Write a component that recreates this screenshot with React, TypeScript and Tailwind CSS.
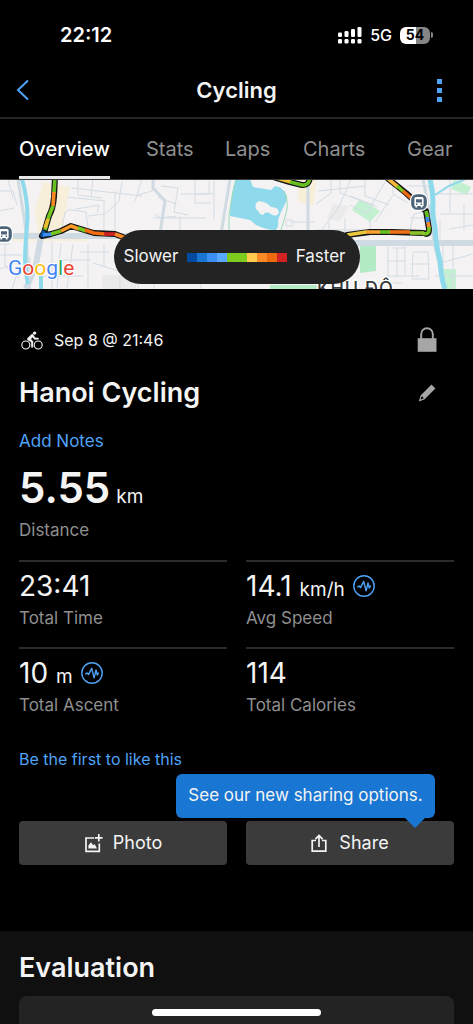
import clsx from 'clsx';

const TABS = ['Overview', 'Stats', 'Laps', 'Charts', 'Gear'];

const SPEED_COLORS = [
  'bg-[#004a9f]',
  'bg-[#1976d2]',
  'bg-[#3b8ff3]',
  'bg-[#58a8ff]',
  'bg-[#7ecb20]',
  'bg-[#7ecb20]',
  'bg-[#ffcb4f]',
  'bg-[#fb8a26]',
  'bg-[#ed6a10]',
  'bg-[#d32222]',
];

interface Metric {
  label: string;
  value: string;
  unit?: string;
  corrected?: boolean;
}

const METRICS: Metric[] = [
  { label: 'Total Time', value: '23:41' },
  { label: 'Avg Speed', value: '14.1', unit: 'km/h', corrected: true },
  { label: 'Total Ascent', value: '10', unit: 'm', corrected: true },
  { label: 'Total Calories', value: '114' },
];

function SignalIcon() {
  return (
    <svg width="25" height="18" viewBox="0 0 25 18" fill="#fff">
      <rect x="1" y="6.5" width="4" height="4.5" rx="1.2" />
      <rect x="7.5" y="5" width="4" height="6" rx="1.2" />
      <rect x="14" y="3" width="4" height="8" rx="1.2" />
      <rect x="20.5" y="1" width="4" height="10" rx="1.2" />
      <rect x="1" y="13" width="4" height="4.5" rx="1.2" />
      <rect x="7.5" y="13" width="4" height="4.5" rx="1.2" />
      <rect x="14" y="13" width="4" height="4.5" rx="1.2" />
      <rect x="20.5" y="13" width="4" height="4.5" rx="1.2" />
    </svg>
  );
}

function BikeIcon() {
  return (
    <svg width="22" height="19" viewBox="0 0 22 19" fill="none" stroke="#f4f4f4">
      <circle cx="4.8" cy="14" r="4" strokeWidth="1.1" />
      <circle cx="17.2" cy="14" r="4" strokeWidth="1.1" />
      <circle cx="13.6" cy="2.1" r="1.7" fill="#f4f4f4" stroke="none" />
      <path d="M10.8 3.2 6.6 7.2q-.8.9.2 1.7l3.5 2.2.1 5.2h1.5v-6L9.6 8l2.2-2 1.5 2.3h4.1V7h-3.2l-2.1-3.4q-.6-.9-1.3-.4z" fill="#f4f4f4" strokeWidth=".5" />
    </svg>
  );
}

function LockIcon() {
  return (
    <svg width="20" height="26" viewBox="0 0 20 26" fill="none">
      <path d="M4.2 12V7a5.8 5.8 0 0 1 11.6 0v5" stroke="#a6a6a6" strokeWidth="1.9" />
      <path d="M.7 11.2h18.8v13.6H.7z" fill="#a6a6a6" />
    </svg>
  );
}

function PencilIcon() {
  return (
    <svg width="18" height="18" viewBox="0 0 18 18" fill="#a6a6a6">
      <path fillRule="evenodd" d="M13.5.6 17.4 4.5 6.4 15.4.7 17.4 2.6 11.5zM3.6 12.6 2.5 15.6 5.4 14.5 5.2 13z" />
    </svg>
  );
}

function CorrectedIcon() {
  return (
    <svg width="22" height="22" viewBox="0 0 22 22" fill="none" stroke="#4fa3f7">
      <circle cx="11" cy="11" r="10.2" strokeWidth="1.4" />
      <path d="M4.3 12.2 6.2 11l1.3 1.6L10.7 6.4l2.4 9.4L15 8l1.3 5 1.4-2.3" strokeWidth="1.4" strokeLinejoin="round" />
    </svg>
  );
}

function PhotoIcon() {
  return (
    <svg width="19" height="19" viewBox="0 0 19 19" fill="none" stroke="#f4f4f4">
      <path d="M10.3 4H2v13.3h13.3V9.5" strokeWidth="1.7" />
      <path d="M14.8 0v7.6M11 3.8h7.6" strokeWidth="1.7" />
      <path d="M4.4 14.6v-3l2.6-3.4 2.2 3 1.4-1.2 2.4 4.6z" fill="#f4f4f4" stroke="none" />
    </svg>
  );
}

function ShareIcon() {
  return (
    <svg width="16" height="19" viewBox="0 0 16 19" fill="none" stroke="#f4f4f4" strokeWidth="1.7">
      <path d="M5 6.5H1.2v10.7h13.6V6.5H11M8 13V1.5M4.4 5.2 8 1.5l3.6 3.7" />
    </svg>
  );
}

function BusStop({ x, y }: { x: number; y: number }) {
  return (
    <g transform={`translate(${x} ${y})`}>
      <rect x="-8.5" y="-8.5" width="17" height="17" rx="6.5" fill="#4d6478" stroke="#fff" strokeWidth="1.3" />
      <path fillRule="evenodd" fill="#fff" d="M-3-5h6q1.6 0 1.6 1.6V4h-1v1.5H1.8V4h-3.6v1.5h-1.8V4h-1v-7.4Q-4.6-5-3-5zM-3-2.8V.4h6v-3.2zM-3 1.6V3h1.4V1.6zM1.6 1.6V3H3V1.6z" />
    </g>
  );
}

function RouteMap() {
  return (
    <svg className="block h-[109px] w-full" viewBox="0 1 473 109" preserveAspectRatio="xMidYMid slice" role="img" aria-label="Activity route map">
      <rect width="473" height="110" fill="#f4f2f3" />

      {/* blocks and parks */}
      <path d="M43 3 70 8 62 54 90 56 88 62H8l-2-7 32-2-3-22zM298 0h18l-2 27-16-4z" fill="#f8efdb" />
      <path d="m360 20 20 12-10 11-18-12z" fill="#c4f0d2" />
      <path d="M360 61h16v31l-16 2zM270 106h50v4h-50z" fill="#b4ebc7" />
      <path d="m333 25 16 2-9 15-13-2zM102 96h34v14H102z" fill="#eaeaea" />
      <path d="m454 0 17 8-4 8-16-6zM442 90h14v20h-14z" fill="#c4f0d2" />

      {/* side streets */}
      <g fill="none" stroke="#d3dce4" strokeWidth="1">
        <path d="M0 12h13l4 14M0 32l14-3M8 0l5 20M0 76h22M5 60v27l14 12M0 90l13-5M12 110l6-18M30 78v32M0 65h10" />
        <path d="M78 0v16l24 3M93 0l-2 18M67 18l38 4M72 9l70 8M76 30l23-4-2 8M104 22v34M122 2l-3 20-16 15M142 0l-7 22M62 48l3-14q2-4 7-3l14 2 2 16M88 37l16-2" />
        <path d="M115 12v45M154 0l-2 12-14 4M161 7l17 2-4 24 14 3M158 18l18 7M155 35l6 4 16-2M153 39h53M180 37v17M181 15h28v-13M195 0v24h16M214 2v38M195 15h19" />
        <path d="M52 62v48M61 64l-4 45M73 65l-6 44M88 65v45M104 65v23M58 81h33M43 97h40M80 73h29M120 110V98M138 110v-8M154 110v-6M201 110v-6M93 84l29 9" />
        <path d="M290 43h25M286 41h7v6h-7zM318 12l48-5M316 25l15-11M331 0v14M340 0v14l34 12M350 17l27 11M365 0v17l24 9M385 3l-18 31-17-8M375 43l18-27M393 0v15l15 9M316 51h78M351 0l-12 28-23 31M329 58V43M345 60V39M370 56V41M407 7h21l5 13M410 39h23M410 50l4-15 13-3" />
        <path d="M440 41v19M440 35h33M449 50l24-4M464 25v26M450 0v34M432 15h41M443 67v43M453 65v45M440 84l33-9M435 97h38" />
        <path d="M388 65v34M397 69v29M405 67v28M387 82h19M387 97h32M367 100v10M413 73h15l1 27h-17zM410 85h20M365 104h37M393 69h12" />
      </g>
      <g fill="none" stroke="#cfdae3">
        <path d="M18 0l8 52 3 58M153 0v9l12 13-5 32M230 0l-9 55M308 0v58" strokeWidth="3" />
        <path d="M41 57l-5 29-10 24M0 57h220M340 64h133" strokeWidth="6" />
        <path d="M423 0l8 40 3 23 11 47" strokeWidth="3" />
      </g>

      {/* water */}
      <g fill="none" stroke="#8edaec">
        <path d="M22 0q7 25 5 47-2 23-2 34 1 16 3 24M41 96v14" strokeWidth="4" />
        <path d="M430 0q3 12 3 23-1 14 2 25 1 20 5 33 1 18 5 29" strokeWidth="5" />
        <path d="M435 16l14-9 24-10" strokeWidth="2" />
      </g>
      <path d="M236 0h14l3 8 18 3 4-4q6 1 8 4 5 5 4 10l-6 12-3 8q1 7-2 10-10 0-20-5l-6-5-10-2-10-2q0-20 6-37z" fill="#8edaec" />
      <path d="M229 51V36q5-31 7-36M284 12q6 12 1 26l-5 16" fill="none" stroke="#9cdab7" strokeWidth="1" />
      <path d="M231 51q-1-12 6-12 7 5 3 12z" fill="#f4f2f3" />
      <path d="M256 30q-2-6 3-8 8 1 12 6 8 0 8 6-3 5-8 1-5-4-8 1-4-1-4-3z" fill="#f4f2f3" />

      {/* ride track */}
      <g fill="none" strokeLinecap="round" strokeLinejoin="round">
        <path d="M55-2 54 18Q53 30 49 37L44 54 42 57 51 55 61 52 71 47 84 51 94 54 115 55 128 60M273-2 290 3 302 6Q309 7 310-2M386-2 406 14 418 25 426 32 429 50Q429 57 424 54L392 53 370 53 347 56" stroke="#151515" strokeWidth="6" />
        <g strokeWidth="3.6" strokeLinecap="butt">
          <path d="M55-2 54 14" stroke="#67be20" />
          <path d="M54 13 53 27" stroke="#fb8a26" />
          <path d="M53 27 49 37 45 51" stroke="#75c720" />
          <path d="M48 40 45 49" stroke="#efbd32" />
          <path d="M44 52 42 58" stroke="#0756a8" strokeWidth="4" />
          <path d="M43 56 52 55" stroke="#3b8ff3" />
          <path d="M51 55 61 52" stroke="#75c720" />
          <path d="M61 52 71 47 79 50" stroke="#fb9b28" />
          <path d="M78 49 86 52" stroke="#75c720" />
          <path d="M85 51 94 54 105 55" stroke="#f36d12" />
          <path d="M104 55 115 55" stroke="#d32222" />
          <path d="M115 55 128 60" stroke="#fb8a26" />
          <path d="M273-2 291 3" stroke="#efbd32" />
          <path d="M290 3 302 6Q309 7 310-2" stroke="#67be20" />
          <path d="M386-2 398 8" stroke="#f7b73c" />
          <path d="M397 7 404 13" stroke="#75c720" />
          <path d="M403 12 418 25" stroke="#ed6a10" />
          <path d="M426 32 428 40" stroke="#67be20" />
          <path d="M427 38 428 44" stroke="#3b8ff3" />
          <path d="M428 43 429 49" stroke="#fb8a26" />
          <path d="M429 48Q430 57 422 54" stroke="#75c720" />
          <path d="M424 54H410" stroke="#8cc32a" />
          <path d="M410 53H388" stroke="#ed7018" />
          <path d="M390 53H380" stroke="#67be20" />
          <path d="M380 53H365" stroke="#f8a331" />
          <path d="M366 53 347 56" stroke="#e9c83b" />
        </g>
      </g>

      <BusStop x={4} y={55} />
      <BusStop x={419} y={23} />

      <text x="317" y="116" fontSize="18" fontWeight="500" letterSpacing="1" fill="#35383b" stroke="#fff" strokeWidth="3" paintOrder="stroke">KHU ĐÔ</text>

      <text x="8" y="96" fontFamily="Roboto, sans-serif" fontSize="21" fontWeight="400" stroke="#fff" strokeWidth="2" paintOrder="stroke">
        <tspan fill="#4285f4">G</tspan>
        <tspan fill="#ea4335">o</tspan>
        <tspan fill="#fbbc05">o</tspan>
        <tspan fill="#4285f4">g</tspan>
        <tspan fill="#34a853">l</tspan>
        <tspan fill="#ea4335">e</tspan>
      </text>
    </svg>
  );
}

function MetricCell({ metric }: { metric: Metric }) {
  return (
    <div className="h-[87px] border-t-2 border-[#2b2b2b] pt-2">
      <div className="flex h-8 items-center gap-2">
        <div className="flex items-baseline gap-2 text-[#f4f4f4]">
          <span className="text-[28px] leading-8">{metric.value}</span>
          {metric.unit && <span className="text-[19px] leading-6">{metric.unit}</span>}
        </div>
        {metric.corrected && <CorrectedIcon />}
      </div>
      <p className="mt-1 text-[17px] leading-6 text-[#8f8f8f]">{metric.label}</p>
    </div>
  );
}

export default function App() {
  return (
    <div className="flex min-h-screen flex-col bg-black font-[Inter,sans-serif] text-[#f4f4f4]">
      {/* Status bar */}
      <div className="flex h-[70px] items-center justify-between pr-10 pl-[60px]">
        <span className="text-xl font-semibold text-white">22:12</span>
        <div className="flex items-center gap-2 text-white">
          <SignalIcon />
          <span className="text-base font-medium">5G</span>
          <div className="flex items-center gap-px">
            <span className="flex h-[17px] w-[30px] items-center justify-center rounded-md bg-linear-to-r from-white from-55% to-[#858585] to-55% text-sm font-bold text-black">
              54
            </span>
            <span className="h-1.5 w-0.5 rounded-r bg-[#858585]" />
          </div>
        </div>
      </div>

      {/* Navigation */}
      <header className="grid h-[49px] grid-cols-[40px_1fr_40px] items-center border-b-2 border-[#242424] px-4 pb-[7px]">
        <button aria-label="Back" className="flex h-10 items-center">
          <svg width="13" height="22" viewBox="0 0 13 22" fill="none" stroke="#4fa3f7" strokeWidth="2">
            <path d="M12 1.5 2 11l10 9.5" />
          </svg>
        </button>
        <h1 className="text-center text-[22px] font-semibold">Cycling</h1>
        <button aria-label="More options" className="flex h-10 items-center justify-end pr-[15px]">
          <svg width="5" height="23" viewBox="0 0 5 23" fill="#4fa3f7">
            <path d="M0 0h5v5H0zM0 9h5v5H0zM0 18h5v5H0z" />
          </svg>
        </button>
      </header>

      <nav className="grid h-[61px] grid-cols-[127fr_79fr_78fr_104fr_48fr] border-b border-[#3a3a3a] pr-[18px] pl-[19px] text-xl">
        {TABS.map((tab, i) => (
          <button
            key={tab}
            className={clsx(
              'flex h-[60px] justify-self-start border-b-[3px] pt-4',
              i === 0 ? 'border-[#e8e8ea] font-medium text-white' : 'border-transparent text-[#8f8f8f]',
            )}
          >
            {tab}
          </button>
        ))}
      </nav>

      {/* Map */}
      <div className="relative">
        <RouteMap />
        <div className="absolute inset-x-0 bottom-[5px] flex justify-center">
          <div className="flex h-[54px] w-[246px] items-center justify-between rounded-full bg-[#232323] px-2.5 pr-3.5 text-[17px]">
            <span>Slower</span>
            <div className="flex h-[9px]">
              {SPEED_COLORS.map((color, i) => (
                <span key={i} className={clsx('w-[10px]', color)} />
              ))}
            </div>
            <span>Faster</span>
          </div>
        </div>
      </div>

      {/* Activity summary */}
      <main className="px-[19px] pt-[35px]">
        <div className="flex h-8 items-center justify-between pr-[17px]">
          <div className="flex items-center gap-[11px] pl-0.5">
            <BikeIcon />
            <span className="text-base">Sep 8 @ 21:46</span>
          </div>
          <LockIcon />
        </div>

        <div className="mt-[19px] flex h-9 items-center justify-between pr-[18px]">
          <h2 className="text-[27px] font-semibold">Hanoi Cycling</h2>
          <button aria-label="Edit title">
            <PencilIcon />
          </button>
        </div>

        <button className="mt-[17px] flex h-7 items-center text-[17px] text-[#4fa3f7]">Add Notes</button>

        <div className="mt-1.5 flex h-[52px] items-baseline gap-1.5">
          <span className="text-[42px] leading-[52px] font-semibold">5.55</span>
          <span className="text-[19px]">km</span>
        </div>
        <p className="mt-1 text-[17px] leading-6 text-[#8f8f8f]">Distance</p>

        <div className="mt-[18px] grid grid-cols-2 gap-x-[19px]">
          {METRICS.map((metric) => (
            <MetricCell key={metric.label} metric={metric} />
          ))}
        </div>

        <button className="mt-[13px] flex h-6 items-center text-base text-[#4fa3f7]">Be the first to like this</button>

        <div className="relative mt-[50px] grid grid-cols-2 gap-x-[19px]">
          <button className="flex h-11 items-center justify-center gap-2.5 rounded bg-[#3b3b3b] text-lg">
            <PhotoIcon />
            Photo
          </button>
          <button className="flex h-11 items-center justify-center gap-3 rounded bg-[#3b3b3b] text-lg">
            <ShareIcon />
            Share
          </button>
          <div role="tooltip" className="absolute right-[19px] bottom-[47px] flex h-11 w-[259px] items-center justify-center rounded-md bg-[#1976d2] text-[17px] whitespace-nowrap">
            See our new sharing options.
            <svg className="absolute top-full right-2.5" width="20" height="10" viewBox="0 0 20 10" fill="#1976d2">
              <path d="M0 0h20L10 10z" />
            </svg>
          </div>
        </div>
      </main>

      {/* Evaluation */}
      <section className="mt-[66px] flex flex-1 flex-col bg-[#101010] px-[19px] pt-[19px]">
        <h2 className="text-[27px] leading-9 font-semibold">Evaluation</h2>
        <div className="mt-2.5 min-h-7 flex-1 rounded-t-lg bg-[#232323]" />
      </section>

      <div className="fixed inset-x-0 bottom-2 flex justify-center">
        <span className="h-[7px] w-[169px] rounded-full bg-white" />
      </div>
    </div>
  );
}
